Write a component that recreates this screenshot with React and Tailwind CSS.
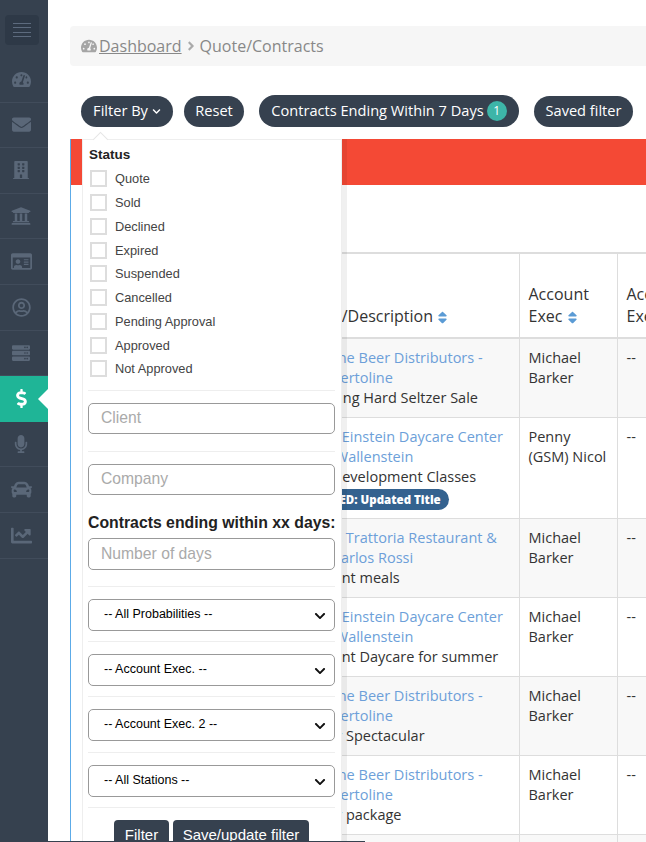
import {
  FaAngleRight,
  FaBuilding,
  FaCar,
  FaChartLine,
  FaChevronDown,
  FaDollarSign,
  FaEnvelope,
  FaMicrophone,
  FaRegIdCard,
  FaRegUserCircle,
  FaServer,
  FaSort,
  FaTachometerAlt,
  FaUniversity,
} from "react-icons/fa";

const navItems = [
  { icon: FaTachometerAlt, size: "text-[19px]" },
  { icon: FaEnvelope, size: "text-[19px]" },
  { icon: FaBuilding, size: "text-[18px]" },
  { icon: FaUniversity, size: "text-[20px]" },
  { icon: FaRegIdCard, size: "text-[21px]" },
  { icon: FaRegUserCircle, size: "text-[19px]" },
  { icon: FaServer, size: "text-[18px]" },
  { icon: FaDollarSign, size: "text-[19px]", active: true },
  { icon: FaMicrophone, size: "text-[18px]" },
  { icon: FaCar, size: "text-[21px]" },
  { icon: FaChartLine, size: "text-[21px]" },
];

const statuses = [
  "Quote",
  "Sold",
  "Declined",
  "Expired",
  "Suspended",
  "Cancelled",
  "Pending Approval",
  "Approved",
  "Not Approved",
];

const rows = [
  {
    lines: ["Carbone Beer Distributors -", "John Bertoline"],
    desc: "Sparkling Hard Seltzer Sale",
    exec: ["Michael", "Barker"],
  },
  {
    lines: ["Albert Einstein Daycare Center", "Marc Wallenstein"],
    desc: "Staff Development Classes",
    exec: ["Penny", "(GSM) Nicol"],
    badge: "UPDATED: Updated Title",
  },
  {
    lines: ["Anna's Trattoria Restaurant &", "Chef Carlos Rossi"],
    desc: "Resident meals",
    exec: ["Michael", "Barker"],
  },
  {
    lines: ["Albert Einstein Daycare Center", "Marc Wallenstein"],
    desc: "Resident Daycare for summer",
    exec: ["Michael", "Barker"],
  },
  {
    lines: ["Carbone Beer Distributors -", "John Bertoline"],
    desc: "Winter Spectacular",
    exec: ["Michael", "Barker"],
  },
  {
    lines: ["Carbone Beer Distributors -", "John Bertoline"],
    desc: "Winter package",
    exec: ["Michael", "Barker"],
  },
  {
    lines: ["Carbone Beer Distributors -", "John Bertoline"],
    desc: "Winter package",
    exec: ["Michael", "Barker"],
  },
];

function Sidebar() {
  return (
    <aside className="w-12 shrink-0 bg-[#36414f] pt-[15px]">
      <div className="ml-[5px] flex h-[30px] w-[34px] flex-col items-center justify-center gap-[3.5px] rounded bg-[#2e3947]">
        <span className="h-px w-[18px] bg-[#5d6b7e]" />
        <span className="h-px w-[18px] bg-[#5d6b7e]" />
        <span className="h-px w-[18px] bg-[#5d6b7e]" />
        <span className="h-px w-[18px] bg-[#5d6b7e]" />
      </div>
      <div className="mt-3">
        {navItems.map((item, i) => {
          const Icon = item.icon;
          return (
            <div
              key={i}
              className={`relative flex h-[45.6px] items-center justify-center pr-[6px] ${
                item.active
                  ? "bg-[#1fb597] text-white"
                  : "border-b border-[#414c5b] text-[#5a6778]"
              } ${item.size}`}
            >
              <Icon />
              {item.active && (
                <span className="absolute right-0 top-[13px] h-0 w-0 border-y-[10px] border-r-[10px] border-y-transparent border-r-white" />
              )}
            </div>
          );
        })}
      </div>
    </aside>
  );
}

function FilterInput({ placeholder }) {
  return (
    <input
      placeholder={placeholder}
      className="block h-[31px] w-[247px] rounded-[5px] border border-[#999] bg-white px-3 text-[15.7px] placeholder:text-[#aaa]"
    />
  );
}

function FilterSelect({ label, className }) {
  return (
    <div className={`relative h-[32px] w-[247px] ${className}`}>
      <select className="h-full w-full appearance-none rounded-[5px] border border-[#999] bg-white pl-[15px] text-[12.5px] text-black">
        <option>{label}</option>
      </select>
      <FaChevronDown className="absolute right-[9px] top-[11px] text-[12px] text-[#111]" />
    </div>
  );
}

function FilterDropdown() {
  return (
    <div className="absolute left-[34px] top-[139px] h-[703px] w-[260px] border-x border-t border-[#eee] bg-white font-['Liberation_Sans',sans-serif] shadow-[5px_0_0_rgba(0,0,0,0.06)]">
      <span className="absolute -top-[6px] left-[12px] h-[11px] w-[11px] rotate-45 border-l border-t border-[#e6e6e6] bg-white" />
      <div className="relative h-full overflow-hidden pl-[5px]">
        <div className="ml-[1px] pt-[8px] text-[13.5px] font-bold leading-[14px] text-[#222]">Status</div>
        <div className="mt-[5px]">
          {statuses.map((s) => (
            <label key={s} className="flex h-[23.75px] items-center">
              <span className="ml-[2px] h-[17px] w-[17px] border-2 border-[#ddd] bg-white" />
              <span className="ml-2 text-[12.8px] text-[#444]">{s}</span>
            </label>
          ))}
        </div>
        <hr className="mt-[9px] w-[247px] border-[#eee]" />
        <div className="mt-3">
          <FilterInput placeholder="Client" />
        </div>
        <hr className="mt-[17px] w-[247px] border-[#eee]" />
        <div className="mt-3">
          <FilterInput placeholder="Company" />
        </div>
        <div className="mt-[18px] text-[15.8px] font-bold leading-[19px] text-[#222]">Contracts ending within xx days:</div>
        <div className="mt-[6px]">
          <input
            placeholder="Number of days"
            className="block h-[32px] w-[247px] rounded-[5px] border border-[#999] bg-white px-3 text-[15.7px] placeholder:text-[#aaa]"
          />
        </div>
        <hr className="mt-[16px] w-[247px] border-[#eee]" />
        <FilterSelect label="-- All Probabilities --" className="mt-3" />
        <hr className="mt-[10px] w-[247px] border-[#eee]" />
        <FilterSelect label="-- Account Exec. --" className="mt-3" />
        <hr className="mt-[10px] w-[247px] border-[#eee]" />
        <FilterSelect label="-- Account Exec. 2 --" className="mt-3" />
        <hr className="mt-[11px] w-[247px] border-[#eee]" />
        <FilterSelect label="-- All Stations --" className="mt-3" />
        <hr className="mt-[10px] w-[247px] border-[#eee]" />
        <div className="mt-3 flex justify-center gap-1 pr-[6px]">
          <button className="h-[30px] w-[55px] rounded bg-[#36414f] text-[15px] text-white">Filter</button>
          <button className="h-[30px] w-[136px] rounded bg-[#36414f] text-[15px] text-white">Save/update filter</button>
        </div>
      </div>
    </div>
  );
}

export default function App() {
  return (
    <div className="flex h-[842px] w-[646px] overflow-hidden bg-white font-['Open_Sans',sans-serif] text-[#333]">
      <Sidebar />
      <main className="relative min-w-0 flex-1">
        <div className="ml-[22px] mt-[26px] flex h-10 w-[600px] items-center rounded bg-[#f6f6f6] pl-[11px] text-base text-[#888]">
          <FaTachometerAlt className="text-[16px] text-[#a5a5a5]" />
          <a className="ml-[2px] text-[#888] underline">Dashboard</a>
          <FaAngleRight className="mx-[2px] text-[14px] text-[#aaa]" />
          <span>Quote/Contracts</span>
        </div>

        <div className="ml-[33px] mt-[29px] flex h-8 items-center whitespace-nowrap text-[14.6px] text-white">
          <button className="flex h-[31px] w-[92px] items-center justify-center gap-1 rounded-full bg-[#36414f]">
            Filter By
            <FaChevronDown className="text-[9px]" />
          </button>
          <button className="ml-[11px] h-[31px] w-[60px] rounded-full bg-[#36414f]">Reset</button>
          <button className="ml-[15px] flex h-8 w-[260px] items-center justify-center gap-[3px] rounded-full bg-[#36414f]">
            Contracts Ending Within 7 Days
            <span className="flex h-5 w-5 items-center justify-center rounded-full bg-[#3db5a8] text-xs">1</span>
          </button>
          <button className="ml-[15px] h-[31px] w-[99px] shrink-0 rounded-full bg-[#36414f]">Saved filter</button>
        </div>

        <section className="ml-[22px] mt-[12px] w-[700px] border-l border-[#5cabe8]">
          <div className="h-[46px] bg-[#f44935]" />
          <div className="h-[67px]" />
          <table className="ml-[11px] w-[689px] table-fixed border-collapse border-t-2 border-[#ddd] text-[14.5px] leading-5">
            <colgroup>
              <col className="w-[205px]" />
              <col className="w-[232px]" />
              <col className="w-[98px]" />
              <col className="w-[154px]" />
            </colgroup>
            <thead>
              <tr className="h-[85px] border-b-2 border-[#ddd]">
                <th />
                <th className="whitespace-nowrap px-[10px] pb-[10px] text-left align-bottom text-base font-medium leading-[22px]">
                  Name/Description <FaSort className="-ml-[2px] inline text-[15px] text-[#5b9bd5]" />
                </th>
                <th className="border-l border-[#ddd] pb-[10px] pl-[9px] text-left align-bottom text-base font-medium leading-[22px]">
                  Account
                  <br />
                  Exec <FaSort className="-ml-[2px] inline text-[15px] text-[#5b9bd5]" />
                </th>
                <th className="border-l border-[#ddd] pb-[10px] pl-[9px] text-left align-bottom text-base font-medium leading-[22px]">
                  Account
                  <br />
                  Exec 2
                </th>
              </tr>
            </thead>
            <tbody>
              {rows.map((row, i) => (
                <tr key={i} className={`border-b border-[#ddd] ${i % 2 === 0 ? "bg-[#f8f8f8]" : "bg-white"}`}>
                  <td />
                  <td className="whitespace-nowrap px-[10px] pb-[9px] pt-[9px] align-top">
                    {row.lines.map((l) => (
                      <div key={l} className="text-[#6d9fd9]">{l}</div>
                    ))}
                    <div>{row.desc}</div>
                    {row.badge && (
                      <span className="mb-[-1px] mt-[2px] block w-fit rounded-full bg-[#34628f] pl-[3px] pr-2 text-[11.5px] font-extrabold leading-[21px] text-white">
                        {row.badge}
                      </span>
                    )}
                  </td>
                  <td className="whitespace-nowrap border-l border-[#ddd] pb-[9px] pl-[9px] pt-[9px] align-top">
                    {row.exec.map((e) => (
                      <div key={e}>{e}</div>
                    ))}
                  </td>
                  <td className="border-l border-[#ddd] pb-[9px] pl-[9px] pt-[9px] align-top">--</td>
                </tr>
              ))}
            </tbody>
          </table>
        </section>

        <FilterDropdown />
        <div className="absolute bottom-0 left-0 h-px w-[317px] bg-[#36414f]" />
      </main>
    </div>
  );
}
